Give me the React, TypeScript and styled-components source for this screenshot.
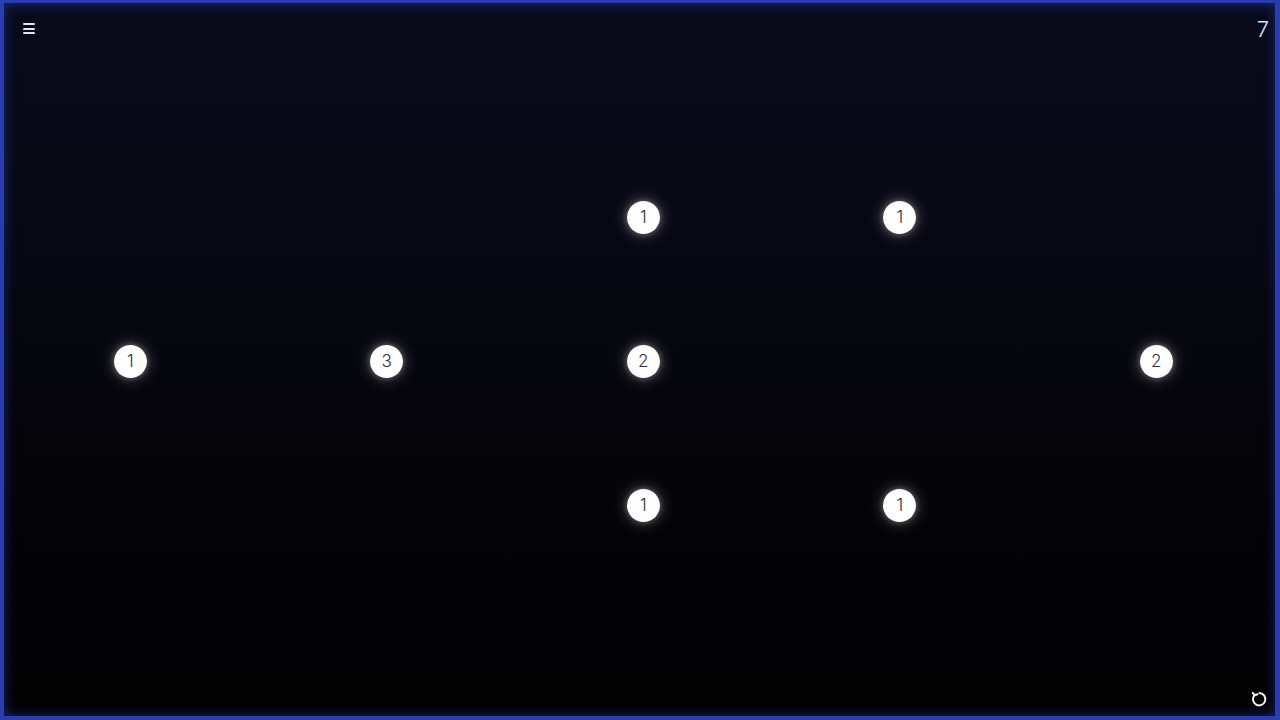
import React from 'react'
import styled, { createGlobalStyle } from 'styled-components'

const GlobalStyle = createGlobalStyle`
  html, body {
    margin: 0;
    padding: 0;
    background: #030306;
    overflow: hidden;
  }
  * {
    box-sizing: border-box;
  }
`

const Board = styled.div`
  position: relative;
  width: 1280px;
  height: 720px;
  overflow: hidden;
  background: linear-gradient(180deg, #090b1c 0%, #070812 35%, #040409 65%, #020203 100%);
  font-family: Inter, 'Noto Sans', sans-serif;
`

const Frame = styled.div`
  position: absolute;
  inset: 0;
  pointer-events: none;
  box-shadow: inset 4px 3px 0 0 #2b3cad, inset -5px -4px 0 0 #2b3cad, inset 0 0 12px 5px rgba(38, 58, 200, 0.5);
`

const Grid = styled.div`
  display: grid;
  grid-template-columns: repeat(5, 256.5px);
  grid-template-rows: repeat(5, 144px);
  padding: 1px 0 0 2px;
`

const Cell = styled.div`
  display: flex;
  align-items: center;
  justify-content: center;
`

const Node = styled.div`
  width: 33px;
  height: 33px;
  border-radius: 50%;
  background: radial-gradient(circle, #ffffff 0%, #fcfcfc 72%, #e4e4e4 100%);
  display: flex;
  align-items: center;
  justify-content: center;
  color: #303036;
  font-size: 17px;
  font-weight: 300;
  box-shadow: 0 0 4px 2px rgba(255, 255, 255, 0.2), 0 0 10px 7px rgba(255, 255, 255, 0.08), 0 0 20px 10px rgba(255, 255, 255, 0.03);
`

const MenuButton = styled.div`
  position: absolute;
  top: 23px;
  left: 23px;
  width: 12px;
  display: flex;
  flex-direction: column;
  gap: 2.5px;

  span {
    display: block;
    height: 2px;
    background: #dfe4f5;
    border-radius: 1px;
  }
`

const Counter = styled.div`
  position: absolute;
  top: 16px;
  right: 11px;
  font-size: 22px;
  font-weight: 300;
  color: #dfe3f2;
`

const Reset = styled.div`
  position: absolute;
  right: 12px;
  bottom: 12px;
  width: 18px;
  height: 18px;
  color: #f0f2fa;
`

interface INode {
  col: number
  row: number
  value: number
}

const nodes: INode[] = [
  { col: 2, row: 1, value: 1 },
  { col: 3, row: 1, value: 1 },
  { col: 0, row: 2, value: 1 },
  { col: 1, row: 2, value: 3 },
  { col: 2, row: 2, value: 2 },
  { col: 4, row: 2, value: 2 },
  { col: 2, row: 3, value: 1 },
  { col: 3, row: 3, value: 1 },
]

const App = () => {
  const cells = []
  for (let row = 0; row < 5; row++) {
    for (let col = 0; col < 5; col++) {
      const node = nodes.find((n) => n.col === col && n.row === row)
      cells.push(<Cell key={`${row}-${col}`}>{node && <Node>{node.value}</Node>}</Cell>)
    }
  }

  return (
    <>
      <GlobalStyle />
      <Board>
        <Grid>{cells}</Grid>
        <MenuButton>
          <span />
          <span />
          <span />
        </MenuButton>
        <Counter>7</Counter>
        <Reset>
          <svg viewBox="0 0 18 18" width="18" height="18" fill="none" stroke="currentColor" strokeWidth="2" strokeLinecap="round" strokeLinejoin="round">
            <path d="M4.6 5 A6.2 6.2 0 1 0 9.6 3" />
            <path d="M2.8 2.8 L4.9 5.3 L7.6 4.2" />
          </svg>
        </Reset>
        <Frame />
      </Board>
    </>
  )
}

export default App
